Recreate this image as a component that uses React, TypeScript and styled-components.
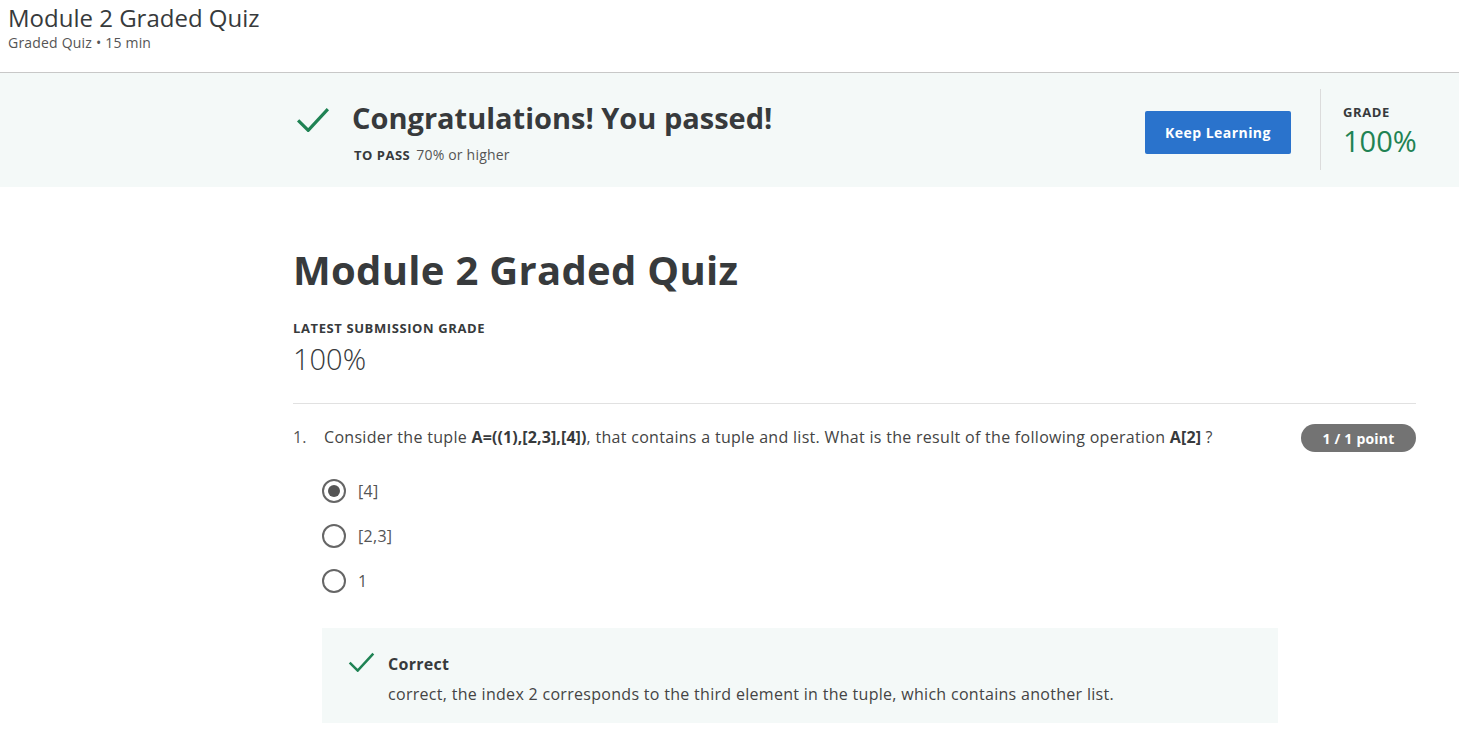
import React from "react";
import styled, { createGlobalStyle } from "styled-components";

const Global = createGlobalStyle`
  html, body { margin: 0; padding: 0; background: #fff; }
  body { font-family: "Open Sans", "Noto Sans", Arial, sans-serif; color: #373a3c; }
  * { box-sizing: border-box; }
`;

const TopBar = styled.header`
  padding: 4px 8px 0 8px;
  height: 73px;
  border-bottom: 1px solid #c8c8c8;
`;
const TopTitle = styled.h1`
  margin: 0;
  font-size: 24px;
  font-weight: 400;
  line-height: 28px;
  color: #373a3c;
`;
const TopSub = styled.div`
  font-size: 14px;
  letter-spacing: 0.2px;
  line-height: 20px;
  color: #555;
  margin-top: 1px;
`;

const Banner = styled.section`
  background: #f4f9f8;
  height: 114px;
  display: flex;
  align-items: center;
  padding: 0 43px 0 296px;
`;
const BannerMain = styled.div`
  display: flex;
  align-items: flex-start;
  flex: 1;
  gap: 20px;
  margin-top: 2px;
`;
const CheckWrap = styled.div`
  width: 36px;
  padding-top: 9px;
  display: flex;
`;
const PassTitle = styled.h2`
  margin: 0;
  font-size: 29px;
  font-weight: 700;
  line-height: 40px;
  color: #373a3c;
`;
const PassInfo = styled.div`
  margin-top: 7px;
  margin-left: 2px;
  font-size: 14px;
  letter-spacing: 0.2px;
  line-height: 20px;
  color: #555;
`;
const Label = styled.span`
  font-size: 13px;
  font-weight: 700;
  letter-spacing: 0.5px;
  text-transform: uppercase;
  color: #373a3c;
  margin-right: 6px;
`;
const BlueButton = styled.button`
  width: 146px;
  height: 43px;
  border: none;
  border-radius: 2px;
  background: #2a73cc;
  color: #fff;
  font-family: inherit;
  font-weight: 700;
  font-size: 14px;
  letter-spacing: 0.45px;
  margin-top: 5px;
`;
const GradeBox = styled.div`
  margin-left: 29px;
  border-left: 1px solid #dcdcdc;
  height: 81px;
  padding: 15px 0 0 22px;
  align-self: flex-start;
  margin-top: 16px;
  width: 96px;
`;
const SmallCaps = styled.div`
  font-size: 13px;
  font-weight: 700;
  letter-spacing: 0.6px;
  color: #373a3c;
  line-height: 16px;
`;
const GreenGrade = styled.div`
  font-size: 29px;
  font-weight: 400;
  color: #1f8354;
  line-height: 32px;
  margin-top: 5px;
`;

const Content = styled.main`
  padding: 55px 43px 0 293px;
`;
const QuizTitle = styled.h1`
  margin: 0;
  font-size: 40px;
  font-weight: 700;
  letter-spacing: 0.3px;
  line-height: 56px;
  color: #373a3c;
`;
const SubmissionLabel = styled(SmallCaps)`
  margin-top: 22px;
`;
const BigGrade = styled.div`
  font-size: 29px;
  font-weight: 300;
  line-height: 36px;
  margin-top: 5px;
  color: #373a3c;
`;
const Divider = styled.hr`
  border: none;
  border-top: 1px solid #e1e1e1;
  margin: 26px 0 0 0;
`;
const QuestionRow = styled.div`
  display: flex;
  align-items: flex-start;
  margin-top: 21px;
`;
const QNum = styled.span`
  width: 31px;
  font-size: 16px;
  line-height: 24px;
  color: #555;
`;
const QText = styled.div`
  flex: 1;
  font-size: 16px;
  letter-spacing: 0.3px;
  line-height: 24px;
  color: #444;
  b { font-weight: 700; color: #373a3c; letter-spacing: 0.1px; }
`;
const PointBadge = styled.span`
  width: 115px;
  height: 28px;
  border-radius: 14px;
  background: #737373;
  color: #fff;
  font-size: 14px;
  letter-spacing: 0.2px;
  font-weight: 700;
  display: flex;
  align-items: center;
  justify-content: center;
  margin-top: -1px;
`;
const Options = styled.div`
  display: flex;
  flex-direction: column;
  gap: 21px;
  margin: 27px 0 0 29px;
`;
const Option = styled.label`
  display: flex;
  align-items: center;
  gap: 12px;
  font-size: 16px;
  letter-spacing: 0.3px;
  line-height: 24px;
  color: #555;
`;
const Radio = styled.span<{ $checked?: boolean }>`
  width: 24px;
  height: 24px;
  border-radius: 50%;
  border: 2px solid #666;
  display: flex;
  align-items: center;
  justify-content: center;
  &::after {
    content: "";
    width: 12px;
    height: 12px;
    border-radius: 50%;
    background: #555;
    display: ${(p) => (p.$checked ? "block" : "none")};
  }
`;
const Feedback = styled.div`
  margin: 35px 0 0 29px;
  width: 956px;
  background: #f4f9f8;
  padding: 24px 24px 17px 26px;
  display: flex;
  gap: 13px;
`;
const FeedbackBody = styled.div`
  display: flex;
  flex-direction: column;
  gap: 6px;
`;
const FeedbackTitle = styled.div`
  font-size: 16px;
  letter-spacing: 0.3px;
  font-weight: 700;
  line-height: 24px;
  color: #373a3c;
`;
const FeedbackText = styled.div`
  font-size: 16px;
  letter-spacing: 0.3px;
  line-height: 24px;
  color: #444;
`;

const Check = ({ size }: { size: number }) => (
  <svg width={size} height={size * 0.75} viewBox="0 0 32 24" fill="none">
    <path d="M2 12.5 L11.5 22 L30 2" stroke="#1f8354" strokeWidth="3" />
  </svg>
);

export default function App() {
  return (
    <>
      <Global />
      <TopBar>
        <TopTitle>Module 2 Graded Quiz</TopTitle>
        <TopSub>Graded Quiz • 15 min</TopSub>
      </TopBar>
      <Banner>
        <BannerMain>
          <CheckWrap>
            <Check size={34} />
          </CheckWrap>
          <div>
            <PassTitle>Congratulations! You passed!</PassTitle>
            <PassInfo>
              <Label>To pass</Label>70% or higher
            </PassInfo>
          </div>
        </BannerMain>
        <BlueButton>Keep Learning</BlueButton>
        <GradeBox>
          <SmallCaps>GRADE</SmallCaps>
          <GreenGrade>100%</GreenGrade>
        </GradeBox>
      </Banner>
      <Content>
        <QuizTitle>Module 2 Graded Quiz</QuizTitle>
        <SubmissionLabel>LATEST SUBMISSION GRADE</SubmissionLabel>
        <BigGrade>100%</BigGrade>
        <Divider />
        <QuestionRow>
          <QNum>1.</QNum>
          <QText>
            Consider the tuple <b>A=((1),[2,3],[4])</b>, that contains a tuple and list. What is the result of the
            following operation <b>A[2]</b> ?
          </QText>
          <PointBadge>1 / 1 point</PointBadge>
        </QuestionRow>
        <Options>
          <Option>
            <Radio $checked />
            [4]
          </Option>
          <Option>
            <Radio />
            [2,3]
          </Option>
          <Option>
            <Radio />1
          </Option>
        </Options>
        <Feedback>
          <Check size={27} />
          <FeedbackBody>
            <FeedbackTitle>Correct</FeedbackTitle>
            <FeedbackText>
              correct, the index 2 corresponds to the third element in the tuple, which contains another list.
            </FeedbackText>
          </FeedbackBody>
        </Feedback>
      </Content>
    </>
  );
}
